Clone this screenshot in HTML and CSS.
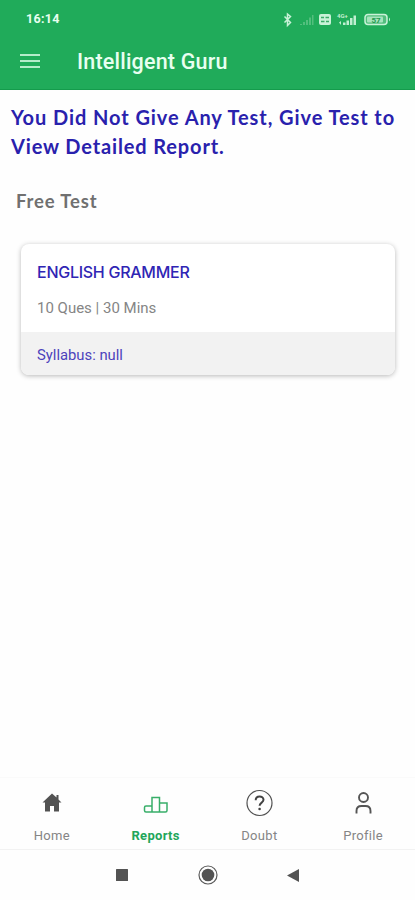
FILE: index.html
```html
<!DOCTYPE html>
<html lang="en">
<head>
<meta charset="utf-8">
<title>Intelligent Guru</title>
<link rel="stylesheet" href="styles.css">
</head>
<body>
<header class="top">
  <div class="status">
    <span class="clock">16:14</span>
    <svg class="status-icons" width="112" height="18" viewBox="0 0 112 18">
      <path d="M2.500 5.500l6 6L5.500 14.500V3l3 2.500-6 6" fill="none" stroke="#c9f2d8" stroke-width="1.500"/>
      <g fill="#63c68a"><path d="M18 13h2v1h-2zM21 11h2v3h-2zM24 9h2v5h-2zM27 6.500h2V14h-2zM30 4h1.500v10H30z" opacity=".75"/></g>
      <rect x="37" y="3" width="12" height="11" rx="2" fill="#c9f2d8"/>
      <path d="M39 6.500h3M43.500 6.500H47M39 10.500h3.500M44 10.500h3" stroke="#3bac68" stroke-width="1.500"/>
      <text class="network" x="55" y="7">4G+</text>
      <path d="M57 11.500l2-1.500v4zM61 11.500h2.500V14H61zM64.500 9.500H67V14h-2.500zM68 7h2.500v7H68zM71.500 4.500H74V14h-2.500z" fill="#c0efd1"/>
      <rect x="83" y="3.500" width="22" height="10" rx="3" fill="#52be7d" stroke="#c9f2d8" stroke-width="1.500"/>
      <rect x="85" y="5.500" width="16" height="6" rx="1" fill="#a6e4bd"/>
      <text class="charge" x="89.500" y="11.500">57</text>
      <path d="M107 6.500q2 2 0 4z" fill="#c9f2d8"/>
    </svg>
  </div>
  <div class="bar">
    <svg class="menu" width="20" height="16" viewBox="0 0 20 16"><path d="M0 2h20M0 8h20M0 14h20" stroke="#b5ecca" stroke-width="2"/></svg>
    <h1 class="title">Intelligent Guru</h1>
  </div>
</header>
<main class="content">
  <p class="notice"><span class="line1">You Did Not Give Any Test, Give Test to</span><br><span class="line2">View Detailed Report.</span></p>
  <h2 class="section">Free Test</h2>
  <article class="card">
    <div class="card-body">
      <h3 class="card-title">ENGLISH GRAMMER</h3>
      <p class="meta">10 Ques | 30 Mins</p>
    </div>
    <div class="card-foot"><span class="syllabus">Syllabus: null</span></div>
  </article>
</main>
<nav class="tabs">
  <a class="tab">
    <svg width="28" height="28" viewBox="0 0 28 28"><path d="M14 4.500L4.500 13.500H7V22.500h5v-5.500h4v5.500h5v-9h2.500L20.500 10.500V6h-2v2.500z" fill="#525252"/></svg>
    <span class="label home">Home</span>
  </a>
  <a class="tab active">
    <svg width="28" height="28" viewBox="0 0 28 28"><path d="M10 23H4q-1.500 0-1.500-1.500v-3q0-1.500 1.500-1.500h6M10 23V8.500h7.500V23M17.500 14H25v7.500q0 1.500-1.500 1.500H10" fill="none" stroke="#38ae69" stroke-width="1.500"/></svg>
    <span class="label reports">Reports</span>
  </a>
  <a class="tab">
    <svg width="28" height="28" viewBox="0 0 28 28"><circle cx="14.500" cy="14" r="12.500" fill="none" stroke="#505050" stroke-width="1.200"/><path d="M10.700 11.200c0-5 7.800-4.800 7.800-.4 0 2.900-3.900 2.700-3.900 6" fill="none" stroke="#424242" stroke-width="2"/><circle cx="14.600" cy="20" r="1.300" fill="#424242"/></svg>
    <span class="label doubt">Doubt</span>
  </a>
  <a class="tab">
    <svg width="28" height="28" viewBox="0 0 28 28"><g fill="none" stroke="#555" stroke-width="1.900"><circle cx="14.500" cy="8.500" r="4.500"/><path d="M7.500 24.500v-2.500q0-5 5-5h4q5 0 5 5v2.500"/></g></svg>
    <span class="label profile">Profile</span>
  </a>
</nav>
<footer class="system">
  <svg width="20" height="20" viewBox="0 0 20 20"><rect x="4" y="4" width="12" height="12" rx=".5" fill="#535353"/></svg>
  <svg width="20" height="20" viewBox="0 0 20 20"><circle cx="10" cy="10" r="9" fill="none" stroke="#5b5b5b" stroke-width="1.200"/><circle cx="10" cy="10" r="6.300" fill="#535353"/></svg>
  <svg width="20" height="20" viewBox="0 0 20 20"><path d="M3 10.500L15 4v13z" fill="#535353"/></svg>
</footer>
</body>
</html>
```

FILE: styles.css
```css
* { box-sizing: border-box; }
body {
  margin: 0;
  width: 415px;
  height: 900px;
  display: flex;
  flex-direction: column;
  overflow: hidden;
  background: #fefefe;
  font-family: Roboto, "Liberation Sans", sans-serif;
}
h1, h2, h3, p { margin: 0; white-space: nowrap; }
.top {
  height: 90px;
  background: #20ab5a;
  border-bottom: 1px solid #149b4c;
  color: #e8fff0;
}
.status {
  height: 38px;
  padding: 2px 19px 0 26px;
  display: flex;
  align-items: center;
  justify-content: space-between;
}
.clock { font-size: 12.5px; line-height: 16px; margin-top: -2px; font-weight: 700; letter-spacing: .3px; }
.status-icons { margin-right: 2px; }
.network { font-size: 6px; font-weight: 700; fill: #c0efd1; }
.charge { font-size: 8px; font-weight: 700; fill: #20994e; }
.bar { height: 48px; display: flex; align-items: center; padding-left: 20px; }
.menu { margin-top: -3px; }
.title { margin-left: 37px; font-size: 21.5px; line-height: 48px; font-weight: 500; letter-spacing: .2px; }
.content { flex: 1; }
.notice {
  padding: 13px 0 0 11px;
  font: 700 20px/29px Lato, sans-serif;
  letter-spacing: .92px;
  color: #2921ad;
}
.line2 { letter-spacing: .86px; }
.section {
  padding: 27px 0 0 16px;
  font: 700 18.5px/26px Lato, sans-serif;
  letter-spacing: .85px;
  color: #707070;
}
.card {
  width: 374px;
  height: 131px;
  margin: 30px 0 0 21px;
  border-radius: 8px;
  overflow: hidden;
  background: #fff;
  box-shadow: 0 1px 5px rgba(0, 0, 0, .28);
}
.card-body { height: 88px; padding: 17px 16px 0; }
.card-title { font: 500 16px/22px Inter, sans-serif; letter-spacing: -.27px; color: #2f25b4; }
.meta { margin-top: 15px; font-size: 15px; line-height: 20px; color: #858585; }
.card-foot {
  height: 43px;
  padding: 2px 0 0 16px;
  display: flex;
  align-items: center;
  background: #f2f2f2;
  font-size: 14.8px;
  color: #4d43bc;
}
.tabs {
  height: 73px;
  display: flex;
  border-top: 1px solid #fafafa;
  border-bottom: 1px solid #f2f2f2;
}
.tab {
  flex: 1;
  padding-top: 11px;
  display: flex;
  flex-direction: column;
  align-items: center;
}
.label { margin-top: 11px; font-size: 13px; line-height: 16px; letter-spacing: .3px; color: #858585; white-space: nowrap; }
.active .label { font-weight: 700; color: #22a65a; }
.system {
  height: 50px;
  display: flex;
  justify-content: center;
  align-items: center;
  gap: 66px;
}
```
